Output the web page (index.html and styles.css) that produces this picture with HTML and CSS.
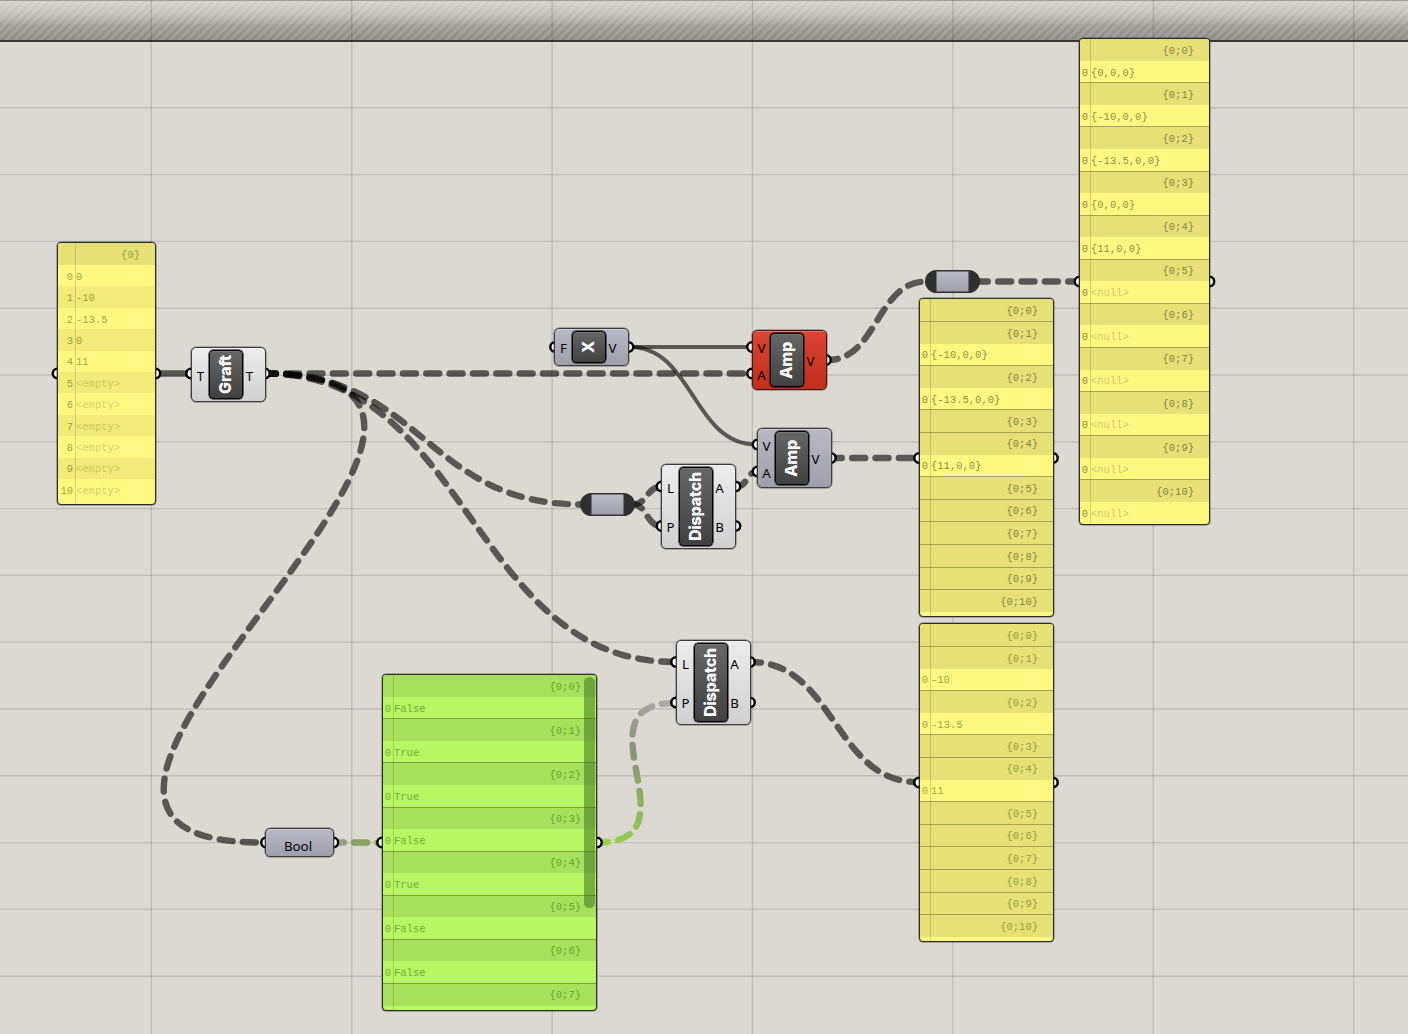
FILE: index.html
```html
<!DOCTYPE html>
<html lang="en">
<head>
  <meta charset="UTF-8">
  <title>Graph Canvas</title>
  <link rel="stylesheet" href="styles.css">
</head>
<body>
  <div class="canvas">
    <div class="topbar"></div>
    <svg class="grid" width="1408" height="1034" id="grid"></svg>

    <svg class="wires" width="1408" height="1034">
      <defs>
        <linearGradient id="toGreen" gradientUnits="userSpaceOnUse" x1="336" y1="0" x2="380" y2="0">
          <stop offset="0" stop-color="#a0a29a"/>
          <stop offset="0.4" stop-color="#8a9a6c"/>
          <stop offset="1" stop-color="#86b548"/>
        </linearGradient>
        <linearGradient id="fromGreen" gradientUnits="userSpaceOnUse" x1="600" y1="842" x2="674" y2="703">
          <stop offset="0" stop-color="#9ad24c"/>
          <stop offset="0.25" stop-color="#8fbe55"/>
          <stop offset="0.6" stop-color="#8c9376"/>
          <stop offset="1" stop-color="#adaca8"/>
        </linearGradient>
      </defs>
      <path class="list" d="M157 373.5H190"/>
      <path class="tree" d="M266 373.5H750"/>
      <path class="tree" d="M266 373.5C423 373.5 425 504.5 582 504.5"/>
      <path class="tree" d="M266 373.5C470 373.5 471 662 675 662"/>
      <path class="tree" d="M266 373.5C608 373.5 -80 842.5 262 842.5"/>
      <path class="item" d="M630 347H750"/>
      <path class="item" d="M630 347C693 347 693 444.5 756 444.5"/>
      <path class="tree" d="M828 360C877 360 877 281.5 926 281.5"/>
      <path class="tree" d="M978 281.5H1078"/>
      <path class="tree" d="M832 458H917"/>
      <path class="tree" d="M633 504.5C647 504.5 647 487 660 487"/>
      <path class="tree" d="M633 504.5C647 504.5 647 526 660 526"/>
      <path class="tree" d="M737 486.5C747 486.5 747 472 756 472"/>
      <path class="tree" d="M751 662C834 662 835 782 917 782"/>
      <path class="tree to-green" d="M334 842.5L380 842.6"/>
      <path class="tree from-green" d="M598 842.5C700 842.5 573 703 675 703"/>
      <g id="grips"></g>
    </svg>

    <div class="node light graft">
      <div class="ports"><span>T</span></div>
      <div class="label"><b>Graft</b></div>
      <div class="ports"><span>T</span></div>
    </div>
    <div class="node unit-x">
      <div class="ports"><span>F</span></div>
      <div class="label"><b>X</b></div>
      <div class="ports"><span>V</span></div>
    </div>
    <div class="node error amp-top">
      <div class="ports"><span>V</span><span>A</span></div>
      <div class="label"><b>Amp</b></div>
      <div class="ports"><span>V</span></div>
    </div>
    <div class="node amp-bottom">
      <div class="ports"><span>V</span><span>A</span></div>
      <div class="label"><b>Amp</b></div>
      <div class="ports"><span>V</span></div>
    </div>
    <div class="node light dispatch-top">
      <div class="ports"><span>L</span><span>P</span></div>
      <div class="label"><b>Dispatch</b></div>
      <div class="ports"><span>A</span><span>B</span></div>
    </div>
    <div class="node light dispatch-bottom">
      <div class="ports"><span>L</span><span>P</span></div>
      <div class="label"><b>Dispatch</b></div>
      <div class="ports"><span>A</span><span>B</span></div>
    </div>
    <div class="node bool"><span>Bool</span></div>
    <div class="relay relay-left"></div>
    <div class="relay relay-right"></div>

    <div class="panel source" id="source"></div>
    <div class="panel vectors" id="vectors"></div>
    <div class="panel filtered" id="filtered"></div>
    <div class="panel numbers" id="numbers"></div>
    <div class="panel green" id="bools"><div class="scrollbar"></div></div>
  </div>

  <script>
    const svgNS = "http://www.w3.org/2000/svg";

    // grid lines
    const grid = document.getElementById("grid");
    function line(x1, y1, x2, y2) {
      const el = document.createElementNS(svgNS, "line");
      el.setAttribute("x1", x1);
      el.setAttribute("y1", y1);
      el.setAttribute("x2", x2);
      el.setAttribute("y2", y2);
      grid.appendChild(el);
    }
    for (let i = 0; i < 7; i++) line(151.3 + i * 200.4, 0, 151.3 + i * 200.4, 1034);
    for (let i = 0; i < 14; i++) line(0, 107.8 + i * 66.8, 1408, 107.8 + i * 66.8);

    // input / output grips
    const grips = [
      [57.5, 373.5], [155.5, 373.5], [191, 373.5], [265, 373.5],
      [555, 347], [628.5, 347], [752, 347], [752, 373.5], [826, 360],
      [757.5, 444.5], [757.5, 471.5], [831, 458],
      [661.5, 486.5], [661.5, 526], [735.5, 486.5], [735.5, 526],
      [676, 662], [676, 702.5], [750, 662], [750, 702.5],
      [266, 842.5], [333.5, 842.5], [382, 842.5], [597, 842.5],
      [919, 458], [1053, 458], [919, 782.5], [1053, 782.5],
      [1079.5, 281.5], [1209.5, 281.5]
    ];
    for (const [cx, cy] of grips) {
      const c = document.createElementNS(svgNS, "circle");
      c.setAttribute("cx", cx);
      c.setAttribute("cy", cy);
      c.setAttribute("r", 4.7);
      document.getElementById("grips").appendChild(c);
    }

    // panels: a branch is [path, items]
    function fill(id, branches) {
      const panel = document.getElementById(id);
      for (const [path, items] of branches) {
        const head = document.createElement("div");
        head.className = "path";
        head.textContent = path;
        panel.appendChild(head);
        items.forEach((value, i) => {
          const row = document.createElement("div");
          row.className = "row" + (value[0] === "<" ? " none" : "");
          const index = document.createElement("span");
          index.className = "index";
          index.textContent = i;
          const text = document.createElement("span");
          text.className = "value";
          text.textContent = value;
          row.append(index, text);
          panel.appendChild(row);
        });
      }
    }
    function tree(values) {
      return values.map((v, i) => ["{0;" + i + "}", v === null ? [] : [v]]);
    }

    fill("source", [["{0}", ["0", "-10", "-13.5", "0", "11",
      "<empty>", "<empty>", "<empty>", "<empty>", "<empty>", "<empty>"]]]);
    fill("vectors", tree(["{0,0,0}", "{-10,0,0}", "{-13.5,0,0}", "{0,0,0}", "{11,0,0}",
      "<null>", "<null>", "<null>", "<null>", "<null>", "<null>"]));
    fill("filtered", tree([null, "{-10,0,0}", "{-13.5,0,0}", null, "{11,0,0}",
      null, null, null, null, null, null]));
    fill("numbers", tree([null, "-10", "-13.5", null, "11",
      null, null, null, null, null, null]));
    fill("bools", tree(["False", "True", "True", "False", "True", "False", "False", null]));
  </script>
</body>
</html>
```
FILE: styles.css
```css
:root {
  --canvas: #dcd9d3;
  --panel: #fff780;
  --ink: rgba(50, 50, 10, 0.58);
  --wire: rgba(0, 0, 0, 0.6);
}
body {
  margin: 0;
  font-family: "Noto Sans", sans-serif;
}
.canvas {
  position: relative;
  width: 1408px;
  height: 1034px;
  overflow: hidden;
  background: var(--canvas);
}
.topbar {
  box-sizing: border-box;
  height: 42px;
  border-top: 1px solid #9c9995;
  border-bottom: 2px solid #383734;
  background:
    repeating-linear-gradient(135deg, rgba(255,255,255,0.13) 0 2.9px, transparent 3.4px 5.6px, rgba(255,255,255,0.13) 6.1px),
    linear-gradient(#d4d0ca, #c4c1bb 30%, #9c9b95 65%, #8a8983);
}
.grid, .wires {
  position: absolute;
  left: 0;
  top: 0;
}
.grid line {
  stroke: rgba(0, 0, 0, 0.13);
  stroke-width: 1.4;
}
.wires path {
  fill: none;
  stroke: var(--wire);
}
.wires .item {
  stroke-width: 4;
}
.wires .list {
  stroke-width: 6.4;
}
.wires .tree {
  stroke-width: 6.4;
  stroke-linecap: round;
  stroke-dasharray: 13 10.35;
  stroke-dashoffset: 3.2;
}
.wires .to-green {
  stroke: url(#toGreen);
}
.wires .from-green {
  stroke: url(#fromGreen);
}
.wires circle {
  fill: #fff;
  stroke: #000;
  stroke-width: 2.5;
}

/* components */
.node {
  position: absolute;
  box-sizing: border-box;
  display: grid;
  grid-template-columns: 17px 34px 13px;
  width: 75px;
  padding: 2px 0;
  border: 1.5px solid #3c3c3e;
  border-radius: 5px;
  background: linear-gradient(#b9b9c6, #9f9fab);
  box-shadow: inset 0 1px 0 rgba(255,255,255,0.3), 0 0 0 0.5px rgba(40,40,40,0.6);
  font-size: 13.3px;
  line-height: 14px;
}
.light {
  background: linear-gradient(#ececec, #d0d0d0);
}
.error {
  background: linear-gradient(#dc4434, #c02e1c);
  border-color: #4a1410;
}
.ports {
  display: flex;
  flex-direction: column;
  text-align: center;
}
.ports span {
  flex: 1;
  display: flex;
  align-items: center;
  justify-content: center;
  padding-top: 2px;
}
.label {
  display: flex;
  align-items: center;
  justify-content: center;
  border: 1px solid #000;
  border-radius: 4px;
  background: linear-gradient(#666, #414141);
  box-shadow: 0 0 0 0.5px #000, inset 0 1px 0 #777;
  color: #fff;
}
.label b {
  writing-mode: vertical-rl;
  transform: rotate(180deg);
  font: 800 16px/18px Inter, sans-serif;
  letter-spacing: -0.2px;
  padding-left: 2px;
}
.graft { left: 191px; top: 347px; height: 55px; }
.unit-x { left: 554px; top: 328px; height: 38px; }
.amp-top { left: 752px; top: 330px; height: 60px; }
.amp-bottom { left: 757px; top: 428px; height: 60px; }
.dispatch-top { left: 661px; top: 464px; height: 85px; }
.dispatch-bottom { left: 676px; top: 640px; height: 85px; }
.bool {
  left: 265px;
  top: 828px;
  width: 69px;
  height: 29px;
  display: flex;
  align-items: center;
  justify-content: center;
  padding: 6px 3px 0 0;
}
.relay {
  position: absolute;
  box-sizing: border-box;
  width: 55px;
  height: 23px;
  border: solid #303030;
  border-width: 1px 11px;
  border-radius: 12px;
  background: linear-gradient(#bcbcc9, #a0a0ac);
  box-shadow: inset 0 0 0 0.5px #303030;
}
.relay-left { left: 580px; top: 493px; }
.relay-right { left: 925px; top: 270px; }

/* panels */
.panel {
  position: absolute;
  box-sizing: border-box;
  border: 1px solid #2c2c28;
  border-radius: 4px;
  overflow: hidden;
  background: var(--panel);
  box-shadow: 0 0 0 0.5px rgba(40,40,40,0.6);
  color: var(--ink);
  font: 10.5px/21.4px "Liberation Mono", monospace;
}
.panel::after {
  content: "";
  position: absolute;
  left: 10px;
  top: 0;
  bottom: 0;
  width: 1px;
  background: rgba(0, 0, 0, 0.15);
}
.path {
  box-sizing: border-box;
  height: 22.7px;
  padding: 1.6px 15px 0 0;
  border-top: 1px solid rgba(0, 0, 0, 0.28);
  background: #e6e077;
  text-align: right;
}
.path:first-child, .scrollbar + .path {
  height: 22px;
  padding-top: 2px;
  border-top: 0;
}
.row {
  display: flex;
  gap: 3px;
  height: 21.4px;
  padding-top: 1.8px;
  box-sizing: border-box;
}
.index {
  width: 8px;
  text-align: right;
}
.none .value {
  opacity: 0.45;
}
.source {
  left: 57px;
  top: 242px;
  width: 99px;
  height: 263px;
  color: rgba(70, 90, 0, 0.55);
}
.source::after {
  left: 17px;
}
.source .index {
  width: 15px;
}
.source .row:nth-child(odd) {
  background: rgba(0, 0, 0, 0.05);
}
.vectors { left: 1079px; top: 38px; width: 131px; height: 487px; }
.filtered { left: 919px; top: 298px; width: 135px; height: 319px; }
.numbers {
  left: 919px;
  top: 623px;
  width: 135px;
  height: 319px;
  color: rgba(70, 90, 0, 0.55);
}
.green {
  left: 382px;
  top: 674px;
  width: 215px;
  height: 337px;
  background: #b8f664;
  color: rgba(30, 90, 0, 0.5);
}
.green .path {
  background: #a8e05d;
}
.scrollbar {
  position: absolute;
  z-index: 1;
  right: 1px;
  top: 2px;
  width: 11px;
  height: 231px;
  border-radius: 6px;
  background: rgba(55, 105, 20, 0.5);
}
```
